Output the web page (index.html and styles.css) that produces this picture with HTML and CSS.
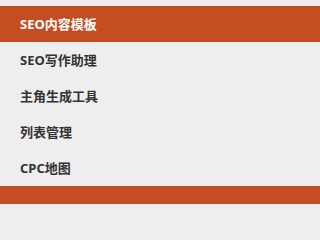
FILE: index.html
```
<!DOCTYPE html>
<html lang="zh">
<head>
<meta charset="utf-8">
<link rel="stylesheet" href="styles.css">
</head>
<body>
<nav class="menu">
  <a class="item active">SEO内容模板</a>
  <a class="item">SEO写作助理</a>
  <a class="item">主角生成工具</a>
  <a class="item">列表管理</a>
  <a class="item">CPC地图</a>
  <div class="footer-bar"></div>
</nav>
</body>
</html>
```
FILE: styles.css
```
html, body {
  margin: 0;
  padding: 0;
  background: #eeeeee;
}
.menu {
  display: flex;
  flex-direction: column;
  padding-top: 6px;
  font-family: "Noto Sans", "Noto Sans CJK SC", sans-serif;
}
.item {
  display: block;
  height: 36px;
  line-height: 36px;
  padding-left: 20px;
  font-size: 13px;
  font-weight: 700;
  color: #333333;
  text-decoration: none;
}
.item.active {
  background: #c44d22;
  color: #ffffff;
}
.footer-bar {
  height: 18px;
  background: #c44d22;
}
```
